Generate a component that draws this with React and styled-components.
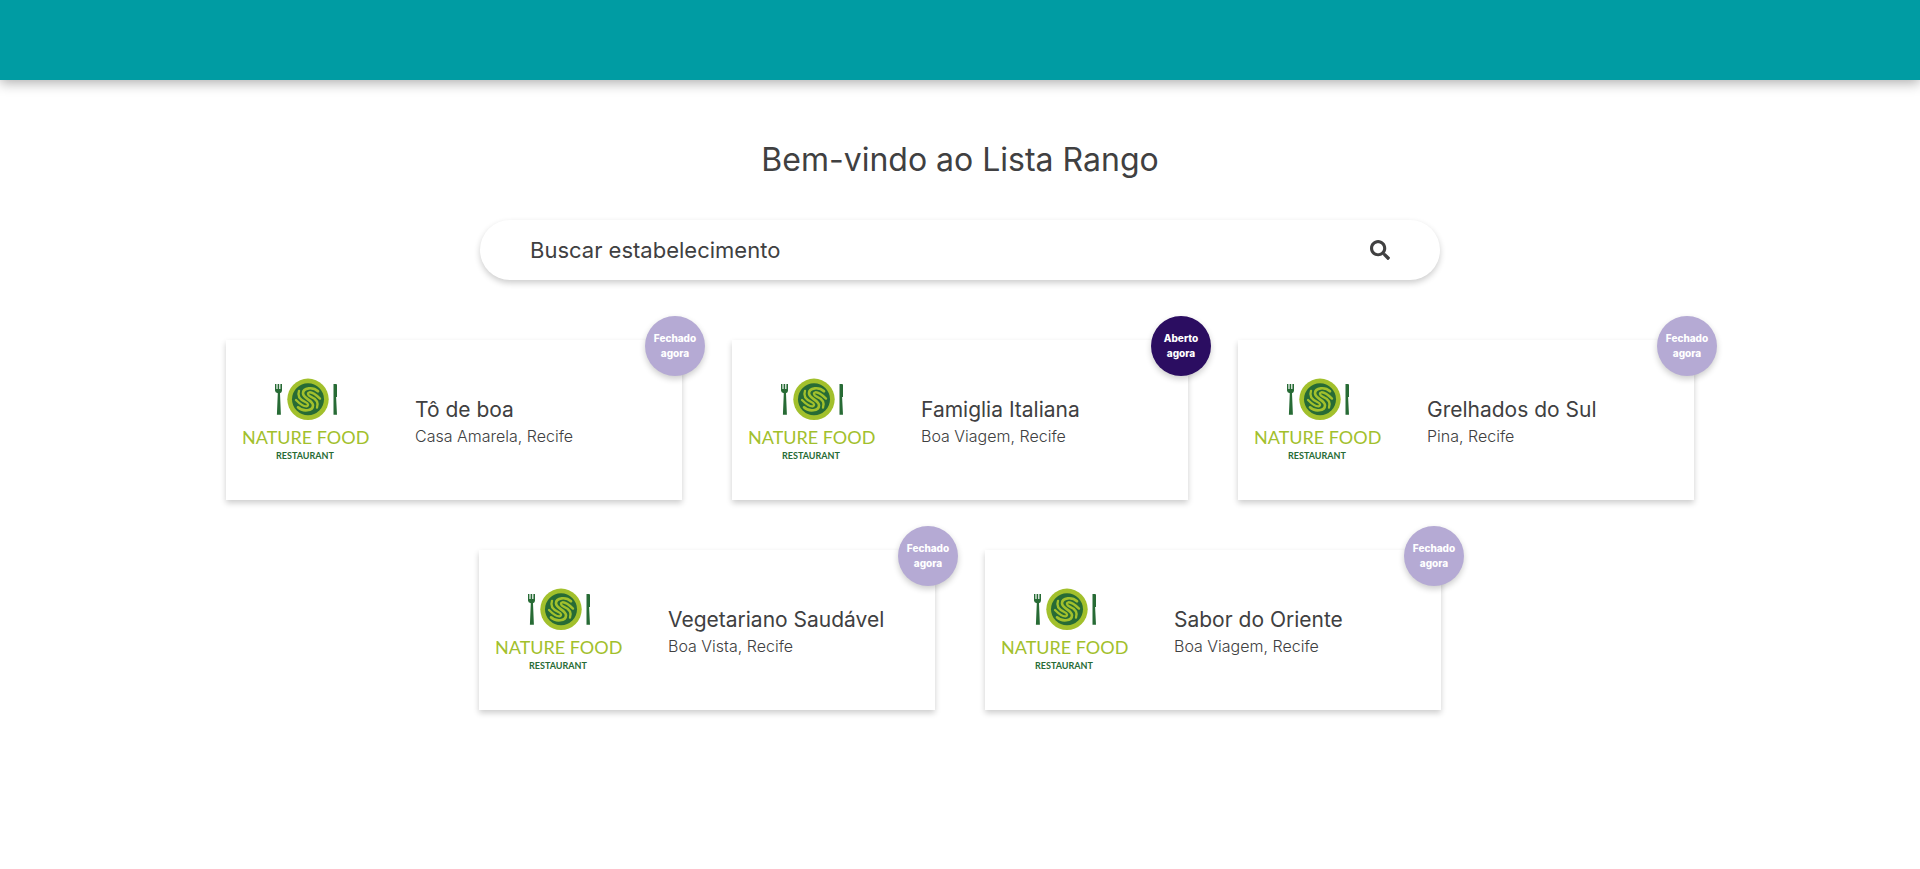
import React from "react";
import styled, { createGlobalStyle } from "styled-components";
import { FaSearch } from "react-icons/fa";

const GlobalStyle = createGlobalStyle`
  * { box-sizing: border-box; }
  body {
    margin: 0;
    background: #ffffff;
    color: #404041;
    font-family: Inter, "Liberation Sans", sans-serif;
  }
`;

const Header = styled.header`
  height: 80px;
  background: #009ca3;
  box-shadow: 0 3px 12px rgba(0, 0, 0, 0.32);
`;

const Main = styled.main`
  display: flex;
  flex-direction: column;
  align-items: center;
  padding: 60px 0;
`;

const Title = styled.h1`
  margin: 0 0 40px;
  font-size: 32px;
  line-height: 40px;
  font-weight: 400;
`;

const SearchBar = styled.form`
  display: flex;
  align-items: center;
  width: 50%;
  min-width: 320px;
  height: 60px;
  margin-bottom: 60px;
  padding: 0 50px;
  border-radius: 30px;
  background: #ffffff;
  box-shadow: 0 3px 6px rgba(0, 0, 0, 0.2);
`;

const SearchInput = styled.input`
  flex: 1;
  min-width: 0;
  padding: 0;
  border: 0;
  outline: 0;
  background: transparent;
  color: inherit;
  font: inherit;
  font-size: 22px;

  &::placeholder {
    color: #404041;
    opacity: 1;
  }
`;

const SearchButton = styled.button`
  display: flex;
  padding: 0;
  border: 0;
  background: transparent;
  color: inherit;
  font-size: 20px;
  cursor: pointer;
`;

const CardList = styled.ul`
  display: flex;
  flex-wrap: wrap;
  justify-content: center;
  gap: 50px;
  max-width: 1520px;
  margin: 0;
  padding: 0;
  list-style: none;
`;

const Card = styled.li`
  position: relative;
  display: flex;
  align-items: center;
  gap: 29px;
  width: 456px;
  height: 160px;
  background: #ffffff;
  box-shadow: 0 3px 6px rgba(0, 0, 0, 0.2);
`;

const Logo = styled.svg`
  flex: none;
  width: 160px;
  height: 160px;
`;

const LogoName = styled.text`
  fill: #a2c02c;
  font: 400 18px Lato, sans-serif;
`;

const LogoKind = styled.text`
  fill: #276b35;
  font: 700 9px Lato, sans-serif;
`;

const Info = styled.div`
  display: flex;
  flex-direction: column;
  padding-top: 4px;
`;

const Name = styled.h2`
  margin: 0;
  font-size: 21px;
  line-height: 28px;
  font-weight: 400;
`;

const Place = styled.p`
  margin: 0;
  font-size: 16px;
  line-height: 24px;
  font-weight: 300;
`;

const Badge = styled.span`
  position: absolute;
  top: -24px;
  right: -23px;
  display: flex;
  align-items: center;
  justify-content: center;
  width: 60px;
  height: 60px;
  border-radius: 50%;
  background: ${({ $open }) => ($open ? "#2b0d61" : "#b5aad4")};
  box-shadow: 0 3px 6px rgba(0, 0, 0, 0.2);
  color: #ffffff;
  font-size: 10px;
  line-height: 15px;
  font-weight: 800;
  text-align: center;
`;

const restaurants = [
  { name: "Tô de boa", place: "Casa Amarela, Recife", open: false },
  { name: "Famiglia Italiana", place: "Boa Viagem, Recife", open: true },
  { name: "Grelhados do Sul", place: "Pina, Recife", open: false },
  { name: "Vegetariano Saudável", place: "Boa Vista, Recife", open: false },
  { name: "Sabor do Oriente", place: "Boa Viagem, Recife", open: false },
];

function NatureFoodLogo() {
  return (
    <Logo viewBox="0 0 160 160" role="img" aria-label="Nature Food Restaurant">
      <g fill="#276b35">
        <path d="M49 44h1.4v5h1.2v-5h1.6v5h1.2v-5h1.6v6.5q0 2-2 2.8l.9 21.4h-4l.9-21.4q-2.8-.8-2.8-2.8z" />
        <path d="M107.500 44h2.500q1 0 1 1v12h-.9l.9 17.700h-3.500z" />
      </g>
      <circle cx="82" cy="59.300" r="20.700" fill="#a2c02c" />
      <circle cx="82" cy="59.300" r="16" fill="#276b35" />
      <g transform="translate(82 59.300) scale(.3333)" fill="none" stroke="#a2c02c" strokeWidth="7" strokeLinecap="round">
        <path d="M30 -24C16 -38 -15 -36 -15 -18C-15 -2 15 2 15 18C15 36 -16 38 -30 24" strokeWidth="8" />
        <path d="M-27 -25C-34 -6 -20 3 -8 8C2 12 2 20 -4 21C-12 22 -24 14 -36 2" />
        <path d="M27 25C34 6 20 -3 8 -8C-2 -12 -2 -20 4 -21C12 -22 24 -14 36 -2" />
      </g>
      <LogoName x="16" y="104">NATURE FOOD</LogoName>
      <LogoKind x="50" y="119">RESTAURANT</LogoKind>
    </Logo>
  );
}

export default function App() {
  return (
    <>
      <GlobalStyle />
      <Header />
      <Main>
        <Title>Bem-vindo ao Lista Rango</Title>
        <SearchBar role="search" onSubmit={(event) => event.preventDefault()}>
          <SearchInput
            type="text"
            aria-label="Buscar estabelecimento"
            placeholder="Buscar estabelecimento"
          />
          <SearchButton type="submit" aria-label="Buscar">
            <FaSearch />
          </SearchButton>
        </SearchBar>
        <CardList>
          {restaurants.map(({ name, place, open }) => (
            <Card key={name}>
              <NatureFoodLogo />
              <Info>
                <Name>{name}</Name>
                <Place>{place}</Place>
              </Info>
              <Badge $open={open}>
                {open ? "Aberto" : "Fechado"}
                <br />
                agora
              </Badge>
            </Card>
          ))}
        </CardList>
      </Main>
    </>
  );
}
